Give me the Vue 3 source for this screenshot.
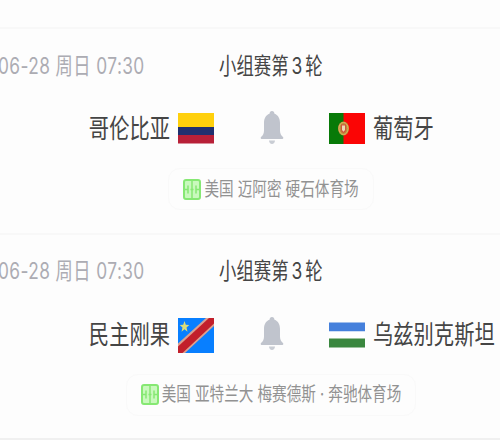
<script setup>
const matches = [
  {
    date: '06-28 周日 07:30',
    round: ['小组赛第', '3', '轮'],
    home: { name: '哥伦比亚', flag: 'co' },
    away: { name: '葡萄牙', flag: 'pt' },
    venue: '美国 迈阿密 硬石体育场',
  },
  {
    date: '06-28 周日 07:30',
    round: ['小组赛第', '3', '轮'],
    home: { name: '民主刚果', flag: 'cd' },
    away: { name: '乌兹别克斯坦', flag: 'uz' },
    venue: '美国 亚特兰大 梅赛德斯 · 奔驰体育场',
  },
]
</script>

<template>
  <main class="list">
    <section v-for="m in matches" :key="m.home.name" class="match">
      <header class="head">
        <span class="date tall">{{ m.date }}</span>
        <span class="round tall"><span>{{ m.round[0] }}</span><span class="num">{{ m.round[1] }}</span><span>{{ m.round[2] }}</span></span>
      </header>
      <div class="teams">
        <div class="team home">
          <span class="name tall">{{ m.home.name }}</span>
          <svg v-if="m.home.flag === 'co'" class="flag" viewBox="0 0 36 36">
            <rect y="2" width="36" height="15" fill="#ffd00c" />
            <rect y="16" width="36" height="9" fill="#20306f" />
            <rect y="24" width="36" height="8.500" fill="#b82038" />
          </svg>
          <svg v-else class="flag" viewBox="0 0 36 36">
            <rect y="1" width="36" height="35" fill="#087fff" />
            <path d="M0 26.500L28 1H36v8L7 36H0z" fill="#dda08f" />
            <path d="M0 29.500L31 1h5v5.500L4.500 36H0z" fill="#c21f2b" />
            <path d="M6.500 4l1.300 3.800 3.500.1-2.800 2.500 1 4.400-3-2.500-3 2.500 1-4.400-2.800-2.500 3.500-.1z" fill="#d9dd78" />
          </svg>
        </div>
        <svg class="bell" viewBox="0 0 24 34">
          <path d="M12 0c1.500 0 2.400 1.200 2.500 2.800C18.300 4.200 20 7.500 20 12v7.500c0 3 1 4.800 3 6.500.5.400.4 2-.6 2H1.600c-1 0-1.100-1.600-.6-2C3 24.300 4 22.500 4 19.500V12c0-4.500 1.700-7.800 5.500-9.200C9.600 1.200 10.500 0 12 0z" fill="#c0c4cd" />
          <path d="M9 29.500h6c-.2 2-1.300 3.500-3 3.500s-2.800-1.500-3-3.500z" fill="#c9cdd4" />
        </svg>
        <div class="team away">
          <svg v-if="m.away.flag === 'pt'" class="flag" viewBox="0 0 36 36">
            <rect y="2" width="15" height="31" fill="#087a08" />
            <rect x="14.500" y="2" width="21.500" height="31" fill="#fb0505" />
            <ellipse cx="14.500" cy="17.500" rx="5.500" ry="7" fill="#c08a3c" />
            <ellipse cx="14.500" cy="17.500" rx="4.500" ry="6" fill="none" stroke="#dcb860" stroke-width="1" />
            <path d="M12 13.500h5v5c0 2-1 3-2.500 3.500C13 21.500 12 20.500 12 18.500z" fill="#d0553b" />
            <path d="M13 14.500h3v4.500l-1.500 1.800-1.500-1.800z" fill="#efd9b5" />
          </svg>
          <svg v-else class="flag" viewBox="0 0 36 36">
            <rect y="5.500" width="36" height="9" fill="#4580dc" />
            <rect y="14.500" width="36" height="7" fill="#fff" />
            <rect y="21.500" width="36" height="9" fill="#3a873f" />
          </svg>
          <span class="name tall">{{ m.away.name }}</span>
        </div>
      </div>
      <div class="venue">
        <svg class="pitch" viewBox="0 0 18 21">
          <rect x="1" y="1" width="16" height="19" rx="2" fill="#c9f9bd" stroke="#86e873" stroke-width="2" />
          <path d="M9 2v17M2 10.500h2.500M13.500 10.500H16M5 6.500v8M13 6.500v8M7.500 10.500h3" fill="none" stroke="#86e873" stroke-width="1.500" />
        </svg>
        <span class="place tall">{{ m.venue }}</span>
      </div>
    </section>
  </main>
</template>

<style>
body {
  background: #fdfdfd;
}
</style>

<style scoped>
.list {
  box-sizing: border-box;
  width: 500px;
  height: 440px;
  padding-top: 27px;
  overflow: hidden;
  background: #fdfdfd;
  border-bottom: 2px solid #f0f0f0;
  font-family: Inter, "Noto Sans CJK SC", sans-serif;
}
.match {
  box-sizing: border-box;
  width: 542px;
  height: 205.500px;
  padding-top: 21px;
  border-top: 2px solid #f8f8f8;
  display: flex;
  flex-direction: column;
  align-items: center;
}
.tall {
  display: block;
  white-space: nowrap;
  transform: scaleY(1.3);
}
.head {
  width: 100%;
  height: 28px;
  display: grid;
  grid-template-columns: 219px 1fr;
  align-items: center;
}
.date {
  margin-left: -2px;
  font-size: 17.300px;
  letter-spacing: 0.420px;
  color: #acacb3;
}
.round {
  display: flex;
  align-items: baseline;
  gap: 3px;
  font-size: 17.400px;
  color: #454545;
}
.teams {
  width: 100%;
  height: 36px;
  margin-top: 33px;
  display: grid;
  grid-template-columns: 214px 115px 1fr;
  align-items: center;
}
.team {
  display: flex;
  align-items: center;
  gap: 8px;
}
.home {
  justify-content: flex-end;
}
.name {
  font-size: 20.300px;
  margin-top: -6px;
  color: #454545;
}
.flag {
  width: 36px;
  height: 36px;
  flex: none;
}
.bell {
  width: 24px;
  height: 34px;
  justify-self: center;
  margin-top: -2px;
}
.venue {
  box-sizing: border-box;
  height: 42px;
  margin-top: 21px;
  padding: 0 14px;
  display: flex;
  align-items: center;
  gap: 3px;
  border: 1px solid #f9f9f9;
  border-radius: 12px;
}
.pitch {
  width: 18px;
  height: 21px;
}
.place {
  font-size: 14.600px;
  margin-top: -4px;
  color: #929292;
}
</style>
